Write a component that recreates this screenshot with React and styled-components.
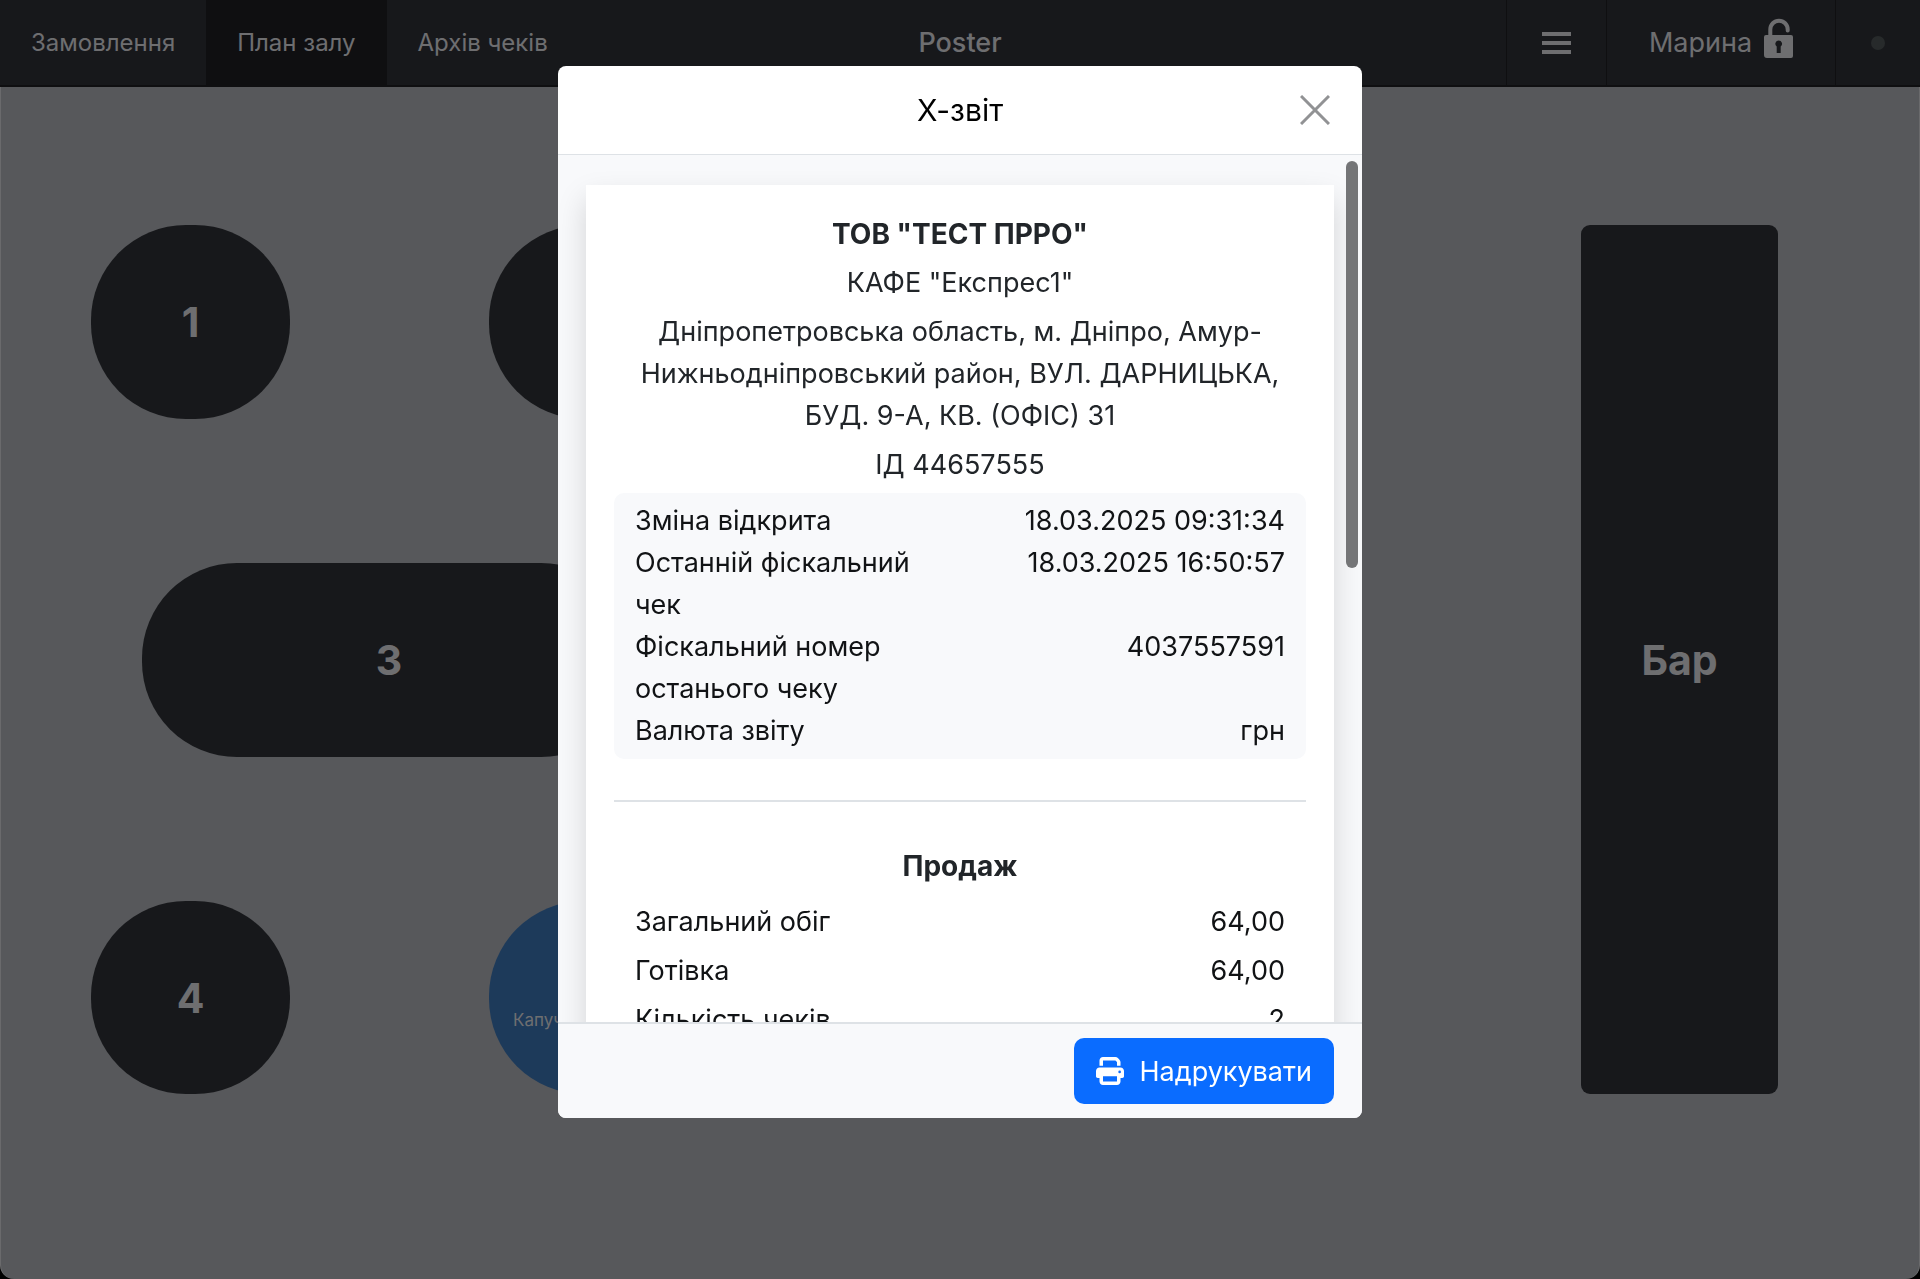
import styled, { createGlobalStyle } from 'styled-components'
import { FaPrint } from 'react-icons/fa6'

const colors = {
	bar: '#2e3036',
	barActive: '#1e1f22',
	barLine: '#1e1f22',
	floor: '#aeb0b6',
	frame: '#d4d5d8',
	barText: '#dcdde0',
	occupied: '#3a74b4',
	light: '#f8f9fb',
	line: '#dee2e6',
	primary: '#0a6cff',
}

const GlobalStyle = createGlobalStyle`
	* {
		box-sizing: border-box;
	}
	body {
		margin: 0;
		background: #000000;
		font-family: Inter, 'Liberation Sans', sans-serif;
	}
	button {
		font-family: inherit;
		border: none;
		cursor: pointer;
	}
`

const Screen = styled.div`
	display: flex;
	flex-direction: column;
	min-height: 100vh;
	overflow: hidden;
	border-radius: 0 0 14px 14px;
	background: ${colors.floor};
`

const TopBar = styled.header`
	display: grid;
	grid-template-columns: 1fr auto 1fr;
	height: 87px;
	background: ${colors.bar};
	border-bottom: 2px solid ${colors.barActive};
	color: ${colors.barText};
`

const Tabs = styled.nav`
	display: flex;
`

const Tab = styled.a`
	display: flex;
	align-items: center;
	padding: 0 31px;
	font-size: 24px;
	color: inherit;
	text-decoration: none;
	background: ${({ $active }) => ($active ? colors.barActive : 'none')};
`

const Brand = styled.div`
	align-self: center;
	font-size: 27px;
	font-weight: 500;
`

const Tools = styled.div`
	display: flex;
	justify-content: flex-end;
`

const Tool = styled.button`
	display: flex;
	align-items: center;
	justify-content: center;
	gap: 12px;
	padding: 0;
	width: ${({ $width }) => $width};
	background: none;
	border-left: 1px solid ${colors.barLine};
	color: inherit;
	font-size: 27px;
`

const StatusDot = styled.span`
	flex: none;
	width: 14px;
	height: 14px;
	border-radius: 50%;
	background: #4e5456;
`

const Floor = styled.main`
	position: relative;
	flex: 1;
	border: 1px solid ${colors.frame};
	border-width: 0 1px;
	border-radius: 0 0 14px 14px;
`

/* tables stand freely on the hall plan */
const HallTable = styled.button`
	position: absolute;
	left: ${({ $x }) => $x}px;
	top: ${({ $y }) => $y}px;
	width: ${({ $w }) => $w}px;
	height: ${({ $h }) => $h}px;
	border-radius: ${({ $square }) => ($square ? 9 : 95)}px;
	background: ${({ $busy }) => ($busy ? colors.occupied : colors.bar)};
	color: ${colors.barText};
	font-size: 41px;
	font-weight: 700;
`

const Order = styled.span`
	position: absolute;
	left: 24px;
	bottom: 64px;
	font-size: 17px;
	font-weight: 400;
`

const Backdrop = styled.div`
	position: fixed;
	inset: 0;
	display: flex;
	justify-content: center;
	align-items: flex-start;
	padding-top: 66px;
	background: rgba(0, 0, 0, 0.5);
`

const Modal = styled.section`
	display: flex;
	flex-direction: column;
	width: 100%;
	max-width: 804px;
	max-height: calc(100vh - 227px);
	overflow: hidden;
	border-radius: 8px;
	background: #ffffff;
`

const ModalHeader = styled.div`
	display: grid;
	grid-template-columns: 1fr auto 1fr;
	align-items: center;
	flex: none;
	height: 89px;
	padding: 0 28px;
	border-bottom: 1px solid ${colors.line};
`

const ModalTitle = styled.h1`
	grid-column: 2;
	margin: 0;
	font-size: 30px;
	font-weight: 400;
`

const CloseButton = styled.button`
	display: flex;
	justify-self: end;
	padding: 4px;
	background: none;
	color: #919294;
`

const ModalBody = styled.div`
	position: relative;
	display: flex;
	min-height: 0;
	background: ${colors.light};
`

const Scroller = styled.div`
	flex: 1;
	overflow-y: auto;
	scrollbar-width: none;
	padding: 30px 28px;
`

const ScrollThumb = styled.div`
	position: absolute;
	top: 6px;
	right: 4px;
	width: 12px;
	height: 47%;
	border-radius: 6px;
	background: #747577;
`

const Receipt = styled.article`
	padding: 28px;
	background: #ffffff;
	box-shadow: 0 14px 28px rgba(0, 0, 0, 0.15);
	font-size: 27px;
	line-height: 42px;
	color: #111315;
`

const Line = styled.p`
	margin: 0 0 7px;
	text-align: center;
	font-size: ${({ $bold }) => ($bold ? 28 : 27)}px;
	font-weight: ${({ $bold }) => ($bold ? 700 : 400)};
	color: #212529;
`

const Details = styled.dl`
	margin: 0;
	padding: 7px 21px;
	border-radius: 10px;
	background: ${colors.light};
`

const Totals = styled.dl`
	display: flex;
	flex-direction: column;
	gap: 7px;
	margin: 0;
	padding: 0 21px;
`

const Row = styled.div`
	display: flex;
`

const Label = styled.dt`
	flex: 1;
`

const Value = styled.dd`
	flex: 1;
	margin: 0;
	text-align: right;
`

const Divider = styled.hr`
	height: 2px;
	margin: 41px 0 43px;
	border: none;
	background: ${colors.line};
`

const SectionTitle = styled.h2`
	margin: 0 0 14px;
	font-size: 28px;
	font-weight: 700;
	line-height: 42px;
	text-align: center;
	color: #212529;
`

const ModalFooter = styled.div`
	display: flex;
	justify-content: flex-end;
	flex: none;
	padding: 14px 28px;
	border-top: 2px solid ${colors.line};
	background: ${colors.light};
`

const PrintButton = styled.button`
	display: flex;
	align-items: center;
	gap: 15px;
	height: 66px;
	padding: 0 22px;
	border-radius: 10px;
	background: ${colors.primary};
	color: #ffffff;
	font-size: 27px;
`

const tabs = ['Замовлення', 'План залу', 'Архів чеків']

const hallTables = [
	{ name: '1', x: 90, y: 138, w: 199, h: 194 },
	{ name: '2', x: 488, y: 138, w: 199, h: 194 },
	{ name: '3', x: 141, y: 476, w: 494, h: 194 },
	{ name: '4', x: 90, y: 814, w: 199, h: 193 },
	{ name: '5', x: 488, y: 814, w: 199, h: 193, order: 'Капучино' },
	{ name: 'Бар', x: 1580, y: 138, w: 197, h: 869, square: true },
]

const details = [
	['Зміна відкрита', '18.03.2025 09:31:34'],
	['Останній фіскальний чек', '18.03.2025 16:50:57'],
	['Фіскальний номер останього чеку', '4037557591'],
	['Валюта звіту', 'грн'],
]

const totals = [
	['Загальний обіг', '64,00'],
	['Готівка', '64,00'],
	['Кількість чеків', '2'],
]

function MenuIcon() {
	return (
		<svg width="29" height="22" viewBox="0 0 29 22" fill="currentColor">
			<path d="M0 0h29v4H0zM0 9h29v4H0zM0 18h29v4H0z" />
		</svg>
	)
}

function UnlockIcon() {
	return (
		<svg width="29" height="50" viewBox="0 0 29 50">
			<path
				d="M6.3 19v-7.6a8.7 8.7 0 0 1 17.4 0v1"
				fill="none"
				stroke="currentColor"
				strokeWidth="4"
				strokeLinecap="round"
			/>
			<path
				d="M2 17h25a2 2 0 0 1 2 2v19a2 2 0 0 1-2 2H3a3 3 0 0 1-3-3V19a2 2 0 0 1 2-2zm12.7 5.5a3.4 3.4 0 0 0-2 6.1V35h4v-6.4a3.4 3.4 0 0 0-2-6.1z"
				fill="currentColor"
				fillRule="evenodd"
			/>
		</svg>
	)
}

function CloseIcon() {
	return (
		<svg width="30" height="30" viewBox="0 0 30 30" stroke="currentColor" strokeWidth="3">
			<path d="M1 1l28 28M29 1L1 29" />
		</svg>
	)
}

function Rows({ items }) {
	return items.map(([label, value]) => (
		<Row key={label}>
			<Label>{label}</Label>
			<Value>{value}</Value>
		</Row>
	))
}

function App() {
	return (
		<>
			<GlobalStyle />
			<Screen>
				<TopBar>
					<Tabs>
						{tabs.map((tab) => (
							<Tab key={tab} href="#" $active={tab === 'План залу'}>
								{tab}
							</Tab>
						))}
					</Tabs>
					<Brand>Poster</Brand>
					<Tools>
						<Tool $width="100px" aria-label="Меню">
							<MenuIcon />
						</Tool>
						<Tool $width="229px">
							Марина
							<UnlockIcon />
						</Tool>
						<Tool $width="85px" aria-label="Статус">
							<StatusDot />
						</Tool>
					</Tools>
				</TopBar>
				<Floor>
					{hallTables.map(({ name, x, y, w, h, order, square }) => (
						<HallTable
							key={name}
							$x={x}
							$y={y}
							$w={w}
							$h={h}
							$square={square}
							$busy={Boolean(order)}
						>
							{name}
							{order && <Order>{order}</Order>}
						</HallTable>
					))}
				</Floor>
			</Screen>

			<Backdrop>
				<Modal role="dialog" aria-labelledby="report-title">
					<ModalHeader>
						<ModalTitle id="report-title">Х-звіт</ModalTitle>
						<CloseButton aria-label="Закрити">
							<CloseIcon />
						</CloseButton>
					</ModalHeader>
					<ModalBody>
						<Scroller>
							<Receipt>
								<Line $bold>ТОВ "ТЕСТ ПРРО"</Line>
								<Line>КАФЕ "Експрес1"</Line>
								<Line>
									Дніпропетровська область, м. Дніпро, Амур-Нижньодніпровський район, ВУЛ.
									ДАРНИЦЬКА, БУД. 9-А, КВ. (ОФІС) 31
								</Line>
								<Line>ІД 44657555</Line>
								<Details>
									<Rows items={details} />
								</Details>
								<Divider />
								<SectionTitle>Продаж</SectionTitle>
								<Totals>
									<Rows items={totals} />
								</Totals>
							</Receipt>
						</Scroller>
						<ScrollThumb />
					</ModalBody>
					<ModalFooter>
						<PrintButton>
							<FaPrint size={28} />
							Надрукувати
						</PrintButton>
					</ModalFooter>
				</Modal>
			</Backdrop>
		</>
	)
}

export default App
